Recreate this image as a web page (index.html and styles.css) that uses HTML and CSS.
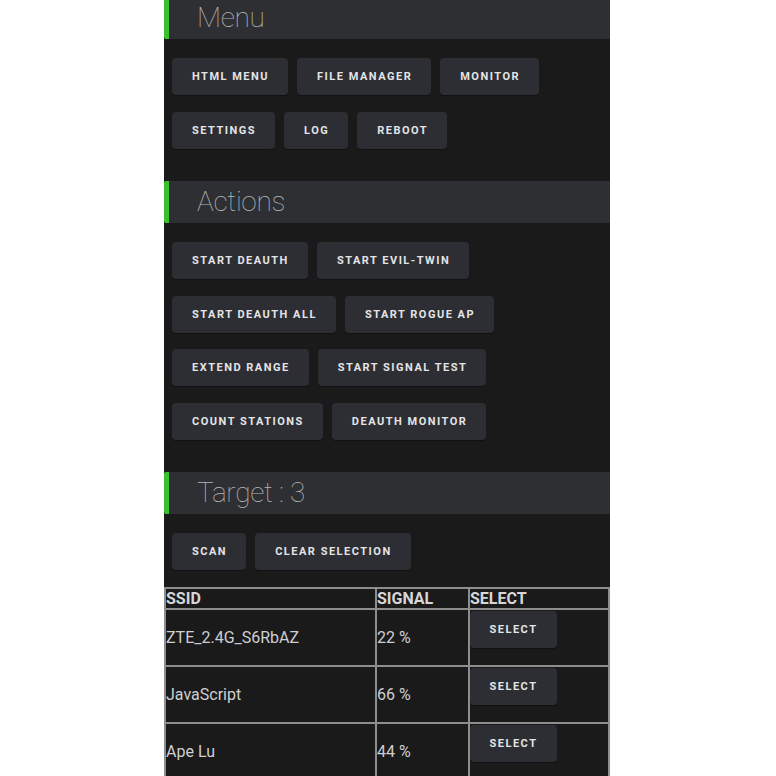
FILE: index.html
```html
<!DOCTYPE html>
<html>
<head>
<meta charset="utf-8">
<link rel="stylesheet" href="styles.css">
</head>
<body>
<div class="page">
  <h2 class="section-head">Menu</h2>
  <div class="btn-group">
    <button class="btn">HTML MENU</button><button class="btn">FILE MANAGER</button><button class="btn">MONITOR</button><br>
    <button class="btn">SETTINGS</button><button class="btn">LOG</button><button class="btn">REBOOT</button>
  </div>

  <h2 class="section-head">Actions</h2>
  <div class="btn-group">
    <button class="btn">START DEAUTH</button><button class="btn">START EVIL-TWIN</button><br>
    <button class="btn">START DEAUTH ALL</button><button class="btn">START ROGUE AP</button><br>
    <button class="btn">EXTEND RANGE</button><button class="btn">START SIGNAL TEST</button><br>
    <button class="btn">COUNT STATIONS</button><button class="btn">DEAUTH MONITOR</button>
  </div>

  <h2 class="section-head">Target : 3</h2>
  <div class="btn-group last">
    <button class="btn">SCAN</button><button class="btn">CLEAR SELECTION</button>
  </div>

  <table class="targets">
    <thead>
      <tr><th class="c-ssid">SSID</th><th class="c-signal">SIGNAL</th><th class="c-select">SELECT</th></tr>
    </thead>
    <tbody>
      <tr><td>ZTE_2.4G_S6RbAZ</td><td>22 %</td><td class="sel"><button class="btn small">SELECT</button></td></tr>
      <tr><td>JavaScript</td><td>66 %</td><td class="sel"><button class="btn small">SELECT</button></td></tr>
      <tr><td>Ape Lu</td><td>44 %</td><td class="sel"><button class="btn small">SELECT</button></td></tr>
    </tbody>
  </table>
</div>
</body>
</html>
```

FILE: styles.css
```css
html, body {
  margin: 0;
  padding: 0;
  background: #ffffff;
}

body {
  font-family: Roboto, "Liberation Sans", sans-serif;
  padding-right: 2px;
}

.page {
  width: 446px;
  margin: -3px auto 0;
  background: #1a1a1b;
  min-height: 800px;
}

.section-head {
  margin: 0;
  height: 42px;
  line-height: 42px;
  box-sizing: border-box;
  background: #2e2f33;
  border-left: 5px solid #3cc12e;
  border-radius: 2px 0 0 2px;
  padding-left: 28px;
  font-size: 28px;
  font-weight: 100;
  color: #b4b5b8;
  letter-spacing: -0.3px;
}

.btn-group {
  padding: 19px 8px 0;
  margin-bottom: 15.5px;
}

.btn-group.last {
  margin-bottom: 0;
}

.btn {
  display: inline-block;
  height: 37px;
  margin: 0 9px 16.7px 0;
  padding: 0 19px 0 20px;
  border: none;
  border-radius: 4px;
  background: #2d2e33;
  color: #e4e4e6;
  font-family: Roboto, "Liberation Sans", sans-serif;
  font-size: 11px;
  font-weight: 700;
  letter-spacing: 1.5px;
  vertical-align: top;
  box-shadow: 0 1px 1px rgba(0, 0, 0, 0.35);
}

.targets {
  width: 446px;
  border-collapse: collapse;
  border: 2px solid #8e8e8e;
  color: #cfcfd1;
  font-size: 16px;
}

.targets th,
.targets td {
  border: 2px solid #8e8e8e;
  padding: 0;
  text-align: left;
  vertical-align: middle;
}

.targets th {
  font-weight: 700;
  color: #d6d6d8;
  line-height: 19px;
}

.c-ssid { width: 209px; }
.c-signal { width: 91px; }

.targets td.sel {
  vertical-align: top;
}

.btn.small {
  margin: 1px 0 17px 0;
  width: 87px;
  padding: 0;
  text-align: center;
}
```
